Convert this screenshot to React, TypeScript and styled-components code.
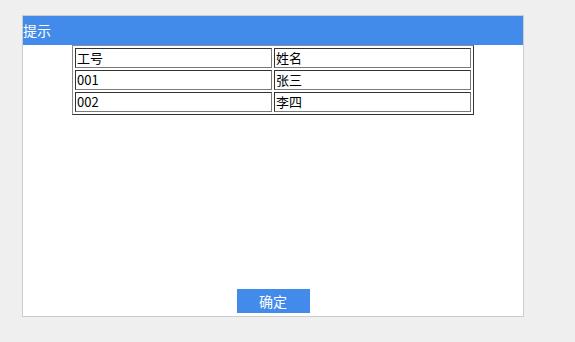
import React from 'react';
import styled, { createGlobalStyle } from 'styled-components';

const GlobalStyle = createGlobalStyle`
  html, body {
    margin: 0;
    padding: 0;
    background: #efefef;
    font-family: "Noto Sans CJK SC", "Noto Sans", sans-serif;
  }
`;

const Page = styled.div`
  min-height: 342px;
  padding: 15px 0 0 22px;
  box-sizing: border-box;
`;

const Dialog = styled.div`
  width: 502px;
  height: 302px;
  box-sizing: border-box;
  border: 1px solid #cccccc;
  background: #ffffff;
  display: flex;
  flex-direction: column;
`;

const Header = styled.div`
  height: 29px;
  flex: none;
  background: #428bea;
  color: #ffffff;
  font-size: 14px;
  line-height: 29px;
  padding-left: 0;
`;

const Body = styled.div`
  flex: 1;
  display: flex;
  flex-direction: column;
  align-items: center;
`;

const Table = styled.table`
  width: 402px;
  border-collapse: separate;
  border-spacing: 2px;
  border: 1px solid;
  border-color: #8a8a8a #333333 #333333 #8a8a8a;
  font-size: 13px;
  color: #000000;
`;

const Cell = styled.td`
  height: 18px;
  padding: 0 1px;
  border: 1px solid;
  border-color: #333333 #7a7a7a #7a7a7a #333333;
  line-height: 18px;
  white-space: nowrap;
`;

const Footer = styled.div`
  margin-top: auto;
  margin-bottom: 3px;
`;

const Button = styled.button`
  width: 73px;
  height: 24px;
  border: none;
  background: #428bea;
  color: #ffffff;
  font-family: inherit;
  font-size: 14px;
  line-height: 24px;
  padding: 0;
  cursor: pointer;
`;

const rows = [
  ['工号', '姓名'],
  ['001', '张三'],
  ['002', '李四'],
];

const App = () => (
  <>
    <GlobalStyle />
    <Page>
      <Dialog>
        <Header>提示</Header>
        <Body>
          <Table>
            <tbody>
              {rows.map((r) => (
                <tr key={r[0]}>
                  {r.map((c) => (
                    <Cell key={c}>{c}</Cell>
                  ))}
                </tr>
              ))}
            </tbody>
          </Table>
          <Footer>
            <Button>确定</Button>
          </Footer>
        </Body>
      </Dialog>
    </Page>
  </>
);

export default App;
